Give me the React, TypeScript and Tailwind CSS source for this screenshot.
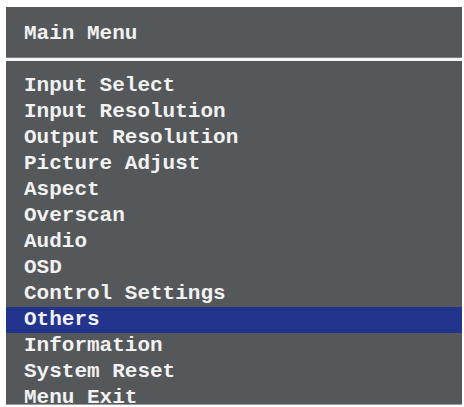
const items = [
  "Input Select",
  "Input Resolution",
  "Output Resolution",
  "Picture Adjust",
  "Aspect",
  "Overscan",
  "Audio",
  "OSD",
  "Control Settings",
  "Others",
  "Information",
  "System Reset",
  "Menu Exit",
];

const selected = "Others";

export default function App() {
  return (
    <div className="w-[464px] h-[407px] bg-white pl-[6px] pt-[7px] pr-[2px] pb-[2px] overflow-hidden">
      <div
        className="flex flex-col h-full bg-[#55585b] text-[#f2f2f2] font-bold text-[21px] overflow-hidden border-b border-[#9a9c9e]"
        style={{ fontFamily: '"Liberation Mono", "Courier New", monospace' }}
      >
        <div className="h-[51px] flex items-center pl-[18px] pt-[3px] border-b border-[#7a7c7e] shrink-0">
          Main Menu
        </div>
        <div className="h-[3px] bg-[#f4f4f4] shrink-0" />
        <div className="flex flex-col pt-[12px]">
          {items.map((item) => (
            <div
              key={item}
              className={
                "h-[26px] leading-[25px] pl-[18px] shrink-0 " +
                (item === selected ? "bg-[#23348f]" : "")
              }
            >
              {item}
            </div>
          ))}
        </div>
      </div>
    </div>
  );
}
